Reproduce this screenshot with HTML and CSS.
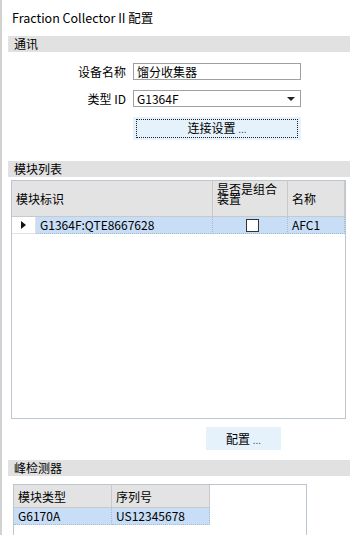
FILE: index.html
```html
<!DOCTYPE html>
<html lang="zh-CN">
<head>
  <meta charset="UTF-8" />
  <title>Fraction Collector II 配置</title>
  <link rel="stylesheet" href="styles.css">
</head>
<body>
  <div class="window">
    <h1 class="title">Fraction Collector II 配置</h1>

    <div class="group-head">通讯</div>
    <div class="form">
      <label class="form-label">设备名称</label>
      <div class="field">馏分收集器</div>

      <label class="form-label">类型 ID</label>
      <div class="field select">
        <span>G1364F</span>
        <span class="caret"></span>
      </div>

      <span></span>
      <button class="btn btn-wide"><span class="focus">连接设置 <i>...</i></span></button>
    </div>

    <div class="group-head">模块列表</div>
    <div class="grid grid-modules">
      <div class="grid-row grid-header">
        <div class="cell col-id-head">模块标识</div>
        <div class="cell col-combo"><span class="wrap">是否是组合装置</span></div>
        <div class="cell col-name">名称</div>
      </div>
      <div class="grid-row selected">
        <div class="cell rowhead"><span class="arrow"></span></div>
        <div class="cell col-id">G1364F:QTE8667628</div>
        <div class="cell col-combo"><span class="check"></span></div>
        <div class="cell col-name">AFC1</div>
      </div>
    </div>

    <div class="actions">
      <button class="btn btn-small">配置 <i>...</i></button>
    </div>

    <div class="group-head">峰检测器</div>
    <div class="grid grid-detectors">
      <div class="grid-row grid-header short">
        <div class="cell col-type">模块类型</div>
        <div class="cell col-serial">序列号</div>
      </div>
      <div class="grid-row selected">
        <div class="cell col-type">G6170A</div>
        <div class="cell col-serial">US12345678</div>
      </div>
    </div>
  </div>
</body>
</html>
```

FILE: styles.css
```css
* {
  margin: 0;
  padding: 0;
  box-sizing: border-box;
}

body {
  background: #fff;
  color: #000;
  font-family: "Noto Sans CJK SC", "Noto Sans", sans-serif;
  font-size: 12px;
  overflow: hidden;
}

.window {
  height: 535px;
  border-left: 2px solid #d2d2d2;
  padding-left: 6px;
}

.title {
  font-size: 12.5px;
  font-weight: normal;
  line-height: 18px;
  padding: 9px 0 0 4px;
  margin-bottom: 9px;
}

/* grey section bands */
.group-head {
  width: 342px;
  height: 16px;
  line-height: 16px;
  background: #e1e1e1;
  padding-left: 6px;
}

/* 通讯 form */
.form {
  display: grid;
  grid-template-columns: 118px 168px;
  column-gap: 7px;
  row-gap: 10px;
  margin: 11px 0 21px;
}

.form-label {
  text-align: right;
  line-height: 17px;
}

.field {
  height: 17px;
  border: 1px solid #a0a0a0;
  padding-left: 3px;
  line-height: 15px;
}

.select {
  display: flex;
  justify-content: space-between;
  align-items: center;
}

.caret {
  width: 0;
  height: 0;
  border-left: 4px solid transparent;
  border-right: 4px solid transparent;
  border-top: 4px solid #222;
  margin-right: 5px;
}

.btn {
  background: #e5f1fb;
  border: none;
  font: inherit;
  color: #000;
}

.btn i {
  font-style: normal;
  color: #5a3d8a;
  font-size: 10px;
}

.btn-wide {
  height: 23px;
  padding: 2px 3px;
}

.btn-wide .focus {
  display: block;
  height: 100%;
  border: 1px dotted #222;
  line-height: 16px;
  text-align: center;
}

/* data grids */
.grid {
  border: 1px solid #bcc6d1;
  background: #fff;
}

.grid-modules {
  width: 335px;
  height: 239px;
  margin: 3px 0 0 3px;
}

.grid-row {
  display: flex;
  width: max-content;
  height: 17px;
  line-height: 16px;
}

.grid-header {
  height: 36px;
  line-height: 36px;
}

.grid-header .cell {
  background: #e3e3e3;
  border-right: 1px solid #c9c9c9;
  border-bottom: 1px solid #c9c9c9;
}

.grid-header.short {
  height: 23px;
  line-height: 23px;
}

.cell {
  padding-left: 4px;
  white-space: nowrap;
  overflow: hidden;
}

.selected .cell {
  background: #c7def6;
  border-right: 1px dotted #a8bccf;
  border-bottom: 1px dotted #a8bccf;
}

.selected .rowhead {
  width: 24px;
  padding: 0;
  display: flex;
  align-items: center;
  justify-content: center;
  background: #fff;
  border-right: 1px solid #e2e2e2;
  border-bottom: 1px solid #e2e2e2;
}

.arrow {
  width: 0;
  height: 0;
  border-top: 4px solid transparent;
  border-bottom: 4px solid transparent;
  border-left: 5px solid #111;
}

.col-id-head {
  width: 201px;
}

.col-id {
  width: 177px;
}

.col-combo {
  width: 75px;
  display: flex;
  justify-content: center;
  align-items: center;
}

.grid-header .col-combo {
  justify-content: flex-start;
  align-items: flex-start;
  padding-top: 3px;
}

.wrap {
  white-space: normal;
  line-height: 10px;
  display: block;
  width: 74px;
}

.col-name {
  width: 57px;
}

.check {
  width: 13px;
  height: 13px;
  border: 1px solid #333;
  background: #fff;
}

.actions {
  display: flex;
  padding: 8px 0 10px 198px;
}

.btn-small {
  width: 75px;
  height: 23px;
}

.grid-detectors {
  width: 294px;
  height: 60px;
  margin: 8px 0 0 5px;
}

.col-type,
.col-serial {
  width: 98px;
}
```
